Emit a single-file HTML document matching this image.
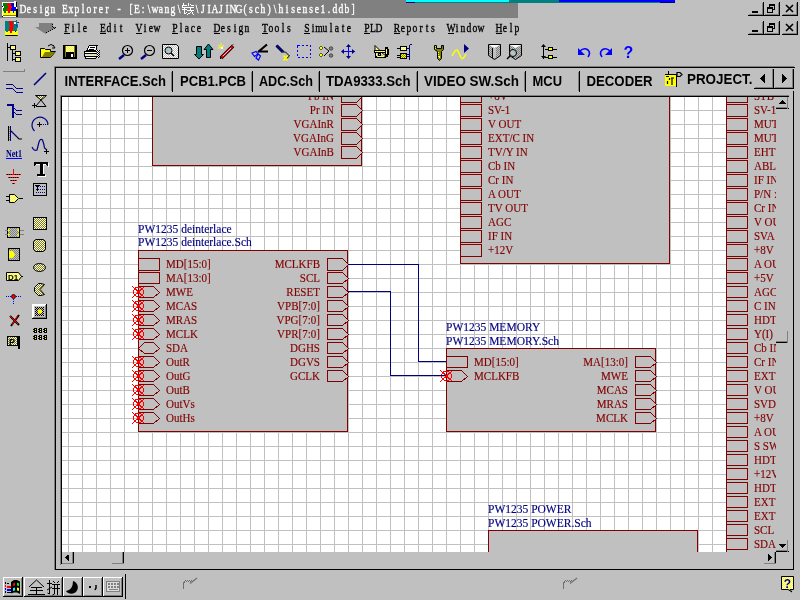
<!DOCTYPE html>
<html><head><meta charset="utf-8"><style>
html,body{margin:0;padding:0;width:800px;height:600px;overflow:hidden;background:#c0c0c0}
svg{position:absolute;left:0;top:0;will-change:transform}
.mono{font-family:"Liberation Mono",monospace}
</style></head><body>
<svg width="800" height="600" viewBox="0 0 800 600" shape-rendering="crispEdges">
<rect x="0" y="0" width="800" height="600" fill="#c0c0c0"/>
<rect x="0" y="0" width="518" height="18" fill="#808080"/>
<rect x="406" y="0" width="269" height="2" fill="#00ffff"/>
<rect x="509" y="0" width="50" height="2" fill="#008080"/>
<rect x="559" y="0" width="116" height="2" fill="#0000ff"/>
<rect x="406" y="2" width="9" height="1" fill="#000080"/>
<rect x="415" y="2" width="245" height="1" fill="#008080"/>
<rect x="660" y="2" width="15" height="1" fill="#000080"/>
<text transform="scale(0.8,1)" x="28.75 36.25 43.75 51.25 58.75 66.25 73.75 81.25 88.75 96.25 103.75 111.25 118.75 126.25 133.75 141.25 148.75 156.25 163.75 171.25 178.75 186.25 193.75 201.25 208.75 216.25 223.75" y="13" font-family="Liberation Serif" font-size="12" text-anchor="middle" fill="#ffffff" stroke="#ffffff" stroke-width="0.35" xml:space="preserve">Design Explorer - [E:\wang\</text>
<text transform="scale(0.8,1)" x="246.25 253.75 261.25 268.75 276.25 283.75 291.25 298.75 306.25 313.75 321.25 328.75 336.25 343.75 351.25 358.75 366.25 373.75 381.25 388.75 396.25 403.75 411.25 418.75 426.25 433.75 441.25" y="13" font-family="Liberation Serif" font-size="12" text-anchor="middle" fill="#ffffff" stroke="#ffffff" stroke-width="0.35" xml:space="preserve">\JIAJING(sch)\hisense1.ddb]</text>
<text transform="scale(0.8,1)" x="83.75 91.25 98.75 106.25" y="32" font-family="Liberation Serif" font-size="12" text-anchor="middle" fill="#000000" stroke="#000000" stroke-width="0.35" xml:space="preserve">File</text>
<rect x="64" y="33" width="6" height="1" fill="#000000"/>
<text transform="scale(0.8,1)" x="128.75 136.25 143.75 151.25" y="32" font-family="Liberation Serif" font-size="12" text-anchor="middle" fill="#000000" stroke="#000000" stroke-width="0.35" xml:space="preserve">Edit</text>
<rect x="100" y="33" width="6" height="1" fill="#000000"/>
<text transform="scale(0.8,1)" x="173.75 181.25 188.75 196.25" y="32" font-family="Liberation Serif" font-size="12" text-anchor="middle" fill="#000000" stroke="#000000" stroke-width="0.35" xml:space="preserve">View</text>
<rect x="136" y="33" width="6" height="1" fill="#000000"/>
<text transform="scale(0.8,1)" x="218.75 226.25 233.75 241.25 248.75" y="32" font-family="Liberation Serif" font-size="12" text-anchor="middle" fill="#000000" stroke="#000000" stroke-width="0.35" xml:space="preserve">Place</text>
<rect x="172" y="33" width="6" height="1" fill="#000000"/>
<text transform="scale(0.8,1)" x="271.25 278.75 286.25 293.75 301.25 308.75" y="32" font-family="Liberation Serif" font-size="12" text-anchor="middle" fill="#000000" stroke="#000000" stroke-width="0.35" xml:space="preserve">Design</text>
<rect x="214" y="33" width="6" height="1" fill="#000000"/>
<text transform="scale(0.8,1)" x="331.25 338.75 346.25 353.75 361.25" y="32" font-family="Liberation Serif" font-size="12" text-anchor="middle" fill="#000000" stroke="#000000" stroke-width="0.35" xml:space="preserve">Tools</text>
<rect x="262" y="33" width="6" height="1" fill="#000000"/>
<text transform="scale(0.8,1)" x="383.75 391.25 398.75 406.25 413.75 421.25 428.75 436.25" y="32" font-family="Liberation Serif" font-size="12" text-anchor="middle" fill="#000000" stroke="#000000" stroke-width="0.35" xml:space="preserve">Simulate</text>
<rect x="304" y="33" width="6" height="1" fill="#000000"/>
<text transform="scale(0.8,1)" x="458.75 466.25 473.75" y="32" font-family="Liberation Serif" font-size="12" text-anchor="middle" fill="#000000" stroke="#000000" stroke-width="0.35" xml:space="preserve">PLD</text>
<rect x="364" y="33" width="6" height="1" fill="#000000"/>
<text transform="scale(0.8,1)" x="496.25 503.75 511.25 518.75 526.25 533.75 541.25" y="32" font-family="Liberation Serif" font-size="12" text-anchor="middle" fill="#000000" stroke="#000000" stroke-width="0.35" xml:space="preserve">Reports</text>
<rect x="394" y="33" width="6" height="1" fill="#000000"/>
<text transform="scale(0.8,1)" x="563.75 571.25 578.75 586.25 593.75 601.25" y="32" font-family="Liberation Serif" font-size="12" text-anchor="middle" fill="#000000" stroke="#000000" stroke-width="0.35" xml:space="preserve">Window</text>
<rect x="448" y="33" width="6" height="1" fill="#000000"/>
<text transform="scale(0.8,1)" x="623.75 631.25 638.75 646.25" y="32" font-family="Liberation Serif" font-size="12" text-anchor="middle" fill="#000000" stroke="#000000" stroke-width="0.35" xml:space="preserve">Help</text>
<rect x="496" y="33" width="6" height="1" fill="#000000"/>
<rect x="763" y="2" width="1" height="14" fill="#000000"/>
<rect x="748" y="15" width="16" height="1" fill="#000000"/>
<rect x="762" y="3" width="1" height="12" fill="#808080"/>
<rect x="749" y="14" width="14" height="1" fill="#808080"/>
<rect x="779" y="2" width="1" height="14" fill="#000000"/>
<rect x="764" y="15" width="16" height="1" fill="#000000"/>
<rect x="778" y="3" width="1" height="12" fill="#808080"/>
<rect x="765" y="14" width="14" height="1" fill="#808080"/>
<rect x="797" y="2" width="1" height="14" fill="#000000"/>
<rect x="782" y="15" width="16" height="1" fill="#000000"/>
<rect x="796" y="3" width="1" height="12" fill="#808080"/>
<rect x="783" y="14" width="14" height="1" fill="#808080"/>
<rect x="752" y="11" width="6" height="2" fill="#000"/>
<rect x="769" y="4" width="6" height="6" fill="#000"/>
<rect x="770" y="6" width="4" height="3" fill="#c0c0c0"/>
<rect x="767" y="7" width="6" height="6" fill="#000"/>
<rect x="768" y="9" width="4" height="3" fill="#c0c0c0"/>
<path d="M786 5L793 12M793 5L786 12" stroke="#000" stroke-width="1.6" shape-rendering="auto"/>
<rect x="763" y="21" width="1" height="14" fill="#000000"/>
<rect x="748" y="34" width="16" height="1" fill="#000000"/>
<rect x="762" y="22" width="1" height="12" fill="#808080"/>
<rect x="749" y="33" width="14" height="1" fill="#808080"/>
<rect x="779" y="21" width="1" height="14" fill="#000000"/>
<rect x="764" y="34" width="16" height="1" fill="#000000"/>
<rect x="778" y="22" width="1" height="12" fill="#808080"/>
<rect x="765" y="33" width="14" height="1" fill="#808080"/>
<rect x="797" y="21" width="1" height="14" fill="#000000"/>
<rect x="782" y="34" width="16" height="1" fill="#000000"/>
<rect x="796" y="22" width="1" height="12" fill="#808080"/>
<rect x="783" y="33" width="14" height="1" fill="#808080"/>
<rect x="752" y="30" width="6" height="2" fill="#000"/>
<rect x="769" y="23" width="6" height="6" fill="#000"/>
<rect x="770" y="25" width="4" height="3" fill="#c0c0c0"/>
<rect x="767" y="26" width="6" height="6" fill="#000"/>
<rect x="768" y="28" width="4" height="3" fill="#c0c0c0"/>
<path d="M786 24L793 31M793 24L786 31" stroke="#000" stroke-width="1.6" shape-rendering="auto"/>
<rect x="54" y="66" width="1" height="504" fill="#808080"/>
<rect x="54" y="66" width="740" height="1" fill="#808080"/>
<rect x="55" y="67" width="1" height="503" fill="#000000"/>
<rect x="55" y="67" width="740" height="1" fill="#000000"/>
<rect x="55" y="569" width="739" height="1" fill="#000000"/>
<rect x="793" y="91" width="1" height="479" fill="#000000"/>
<rect x="773" y="69" width="1" height="20" fill="#000000"/>
<rect x="772" y="69" width="1" height="19" fill="#808080"/>
<rect x="755" y="87" width="18" height="1" fill="#808080"/>
<rect x="793" y="69" width="1" height="20" fill="#000000"/>
<rect x="792" y="69" width="1" height="19" fill="#808080"/>
<rect x="775" y="87" width="18" height="1" fill="#808080"/>
<rect x="754" y="88" width="40" height="1" fill="#000000"/>
<polygon points="760,78.5 765,74 765,83" fill="#000"/>
<polygon points="787,78.5 782,74 782,83" fill="#000"/>
<rect x="172" y="71" width="1" height="21" fill="#000000"/>
<rect x="171" y="72" width="1" height="19" fill="#808080"/>
<rect x="252" y="71" width="1" height="21" fill="#000000"/>
<rect x="251" y="72" width="1" height="19" fill="#808080"/>
<rect x="319" y="71" width="1" height="21" fill="#000000"/>
<rect x="318" y="72" width="1" height="19" fill="#808080"/>
<rect x="417" y="71" width="1" height="21" fill="#000000"/>
<rect x="416" y="72" width="1" height="19" fill="#808080"/>
<rect x="525" y="71" width="1" height="21" fill="#000000"/>
<rect x="524" y="72" width="1" height="19" fill="#808080"/>
<rect x="579" y="71" width="1" height="21" fill="#000000"/>
<rect x="578" y="72" width="1" height="19" fill="#808080"/>
<text x="64.5" y="86" font-family="Liberation Sans" font-weight="bold" font-size="14" fill="#000" textLength="101.5" lengthAdjust="spacingAndGlyphs">INTERFACE.Sch</text>
<text x="180" y="86" font-family="Liberation Sans" font-weight="bold" font-size="14" fill="#000" textLength="66" lengthAdjust="spacingAndGlyphs">PCB1.PCB</text>
<text x="259" y="86" font-family="Liberation Sans" font-weight="bold" font-size="14" fill="#000" textLength="54" lengthAdjust="spacingAndGlyphs">ADC.Sch</text>
<text x="326" y="86" font-family="Liberation Sans" font-weight="bold" font-size="14" fill="#000" textLength="84.5" lengthAdjust="spacingAndGlyphs">TDA9333.Sch</text>
<text x="424" y="86" font-family="Liberation Sans" font-weight="bold" font-size="14" fill="#000" textLength="95" lengthAdjust="spacingAndGlyphs">VIDEO SW.Sch</text>
<text x="532.5" y="86" font-family="Liberation Sans" font-weight="bold" font-size="14" fill="#000" textLength="29.5" lengthAdjust="spacingAndGlyphs">MCU</text>
<text x="586.5" y="86" font-family="Liberation Sans" font-weight="bold" font-size="14" fill="#000" textLength="66" lengthAdjust="spacingAndGlyphs">DECODER</text>
<text x="687" y="84" font-family="Liberation Sans" font-weight="bold" font-size="14" fill="#000" textLength="65.5" lengthAdjust="spacingAndGlyphs">PROJECT.</text>
<rect x="665" y="74" width="12" height="12" fill="#ffff00"/>
<rect x="665" y="74" width="12" height="1" fill="#000"/>
<rect x="668" y="71" width="1" height="4" fill="#000"/>
<rect x="676" y="74" width="1" height="13" fill="#000"/>
<path d="M666 76.5H669M669.5 78V80M667.5 81V84M671 78H674M672 78V85M677 72.5H680L682 74.5L680 76.5H677Z" stroke="#000" stroke-width="1.2" fill="none" shape-rendering="auto"/>
<rect x="60" y="95" width="1" height="470" fill="#808080"/>
<rect x="60" y="95" width="729" height="1" fill="#808080"/>
<rect x="61" y="96" width="1" height="468" fill="#000000"/>
<rect x="61" y="96" width="728" height="1" fill="#000000"/>
<rect x="73" y="552" width="1" height="12" fill="#000000"/>
<rect x="62" y="563" width="12" height="1" fill="#808080"/>
<rect x="72" y="552" width="1" height="11" fill="#808080"/>
<polygon points="65,557.5 68.5,554.5 68.5,560.5" fill="#000"/>
<rect x="123" y="552" width="1" height="12" fill="#000000"/>
<rect x="122" y="552" width="1" height="11" fill="#808080"/>
<rect x="112" y="563" width="12" height="1" fill="#808080"/>
<rect x="775" y="552" width="1" height="12" fill="#000000"/>
<rect x="774" y="552" width="1" height="11" fill="#808080"/>
<rect x="764" y="563" width="12" height="1" fill="#808080"/>
<polygon points="772,557.5 768,554 768,561" fill="#000"/>
<rect x="776" y="108" width="13" height="1" fill="#000000"/>
<rect x="787" y="97" width="1" height="12" fill="#808080"/>
<rect x="776" y="107" width="12" height="1" fill="#808080"/>
<polygon points="782.5,100 779,104 786,104" fill="#000"/>
<rect x="776" y="342" width="12" height="1" fill="#000000"/>
<rect x="787" y="331" width="1" height="12" fill="#808080"/>
<rect x="776" y="341" width="12" height="1" fill="#808080"/>
<rect x="776" y="551" width="13" height="1" fill="#000000"/>
<rect x="787" y="540" width="1" height="12" fill="#808080"/>
<rect x="776" y="550" width="12" height="1" fill="#808080"/>
<polygon points="782.5,548 779,544 786,544" fill="#000"/>
<rect x="3" y="577" width="20" height="1" fill="#ffffff"/>
<rect x="3" y="577" width="1" height="20" fill="#ffffff"/>
<rect x="3" y="596" width="20" height="1" fill="#000000"/>
<rect x="22" y="577" width="1" height="20" fill="#000000"/>
<rect x="4" y="595" width="18" height="1" fill="#808080"/>
<rect x="21" y="578" width="1" height="18" fill="#808080"/>
<rect x="24" y="577" width="39" height="1" fill="#ffffff"/>
<rect x="24" y="577" width="1" height="20" fill="#ffffff"/>
<rect x="24" y="596" width="39" height="1" fill="#000000"/>
<rect x="62" y="577" width="1" height="20" fill="#000000"/>
<rect x="25" y="595" width="37" height="1" fill="#808080"/>
<rect x="61" y="578" width="1" height="18" fill="#808080"/>
<rect x="63" y="577" width="20" height="1" fill="#ffffff"/>
<rect x="63" y="577" width="1" height="20" fill="#ffffff"/>
<rect x="63" y="596" width="20" height="1" fill="#000000"/>
<rect x="82" y="577" width="1" height="20" fill="#000000"/>
<rect x="64" y="595" width="18" height="1" fill="#808080"/>
<rect x="81" y="578" width="1" height="18" fill="#808080"/>
<rect x="83" y="577" width="20" height="1" fill="#ffffff"/>
<rect x="83" y="577" width="1" height="20" fill="#ffffff"/>
<rect x="83" y="596" width="20" height="1" fill="#000000"/>
<rect x="102" y="577" width="1" height="20" fill="#000000"/>
<rect x="84" y="595" width="18" height="1" fill="#808080"/>
<rect x="101" y="578" width="1" height="18" fill="#808080"/>
<rect x="103" y="577" width="20" height="1" fill="#ffffff"/>
<rect x="103" y="577" width="1" height="20" fill="#ffffff"/>
<rect x="103" y="596" width="20" height="1" fill="#000000"/>
<rect x="122" y="577" width="1" height="20" fill="#000000"/>
<rect x="104" y="595" width="18" height="1" fill="#808080"/>
<rect x="121" y="578" width="1" height="18" fill="#808080"/>
<rect x="125" y="574" width="1" height="25" fill="#000000"/>
<defs><pattern id="dy" width="2" height="2" patternUnits="userSpaceOnUse"><rect width="2" height="2" fill="#ffff00"/><rect width="1" height="1" fill="#ffffff"/><rect x="1" y="1" width="1" height="1" fill="#ffffff"/></pattern><pattern id="dk" width="2" height="2" patternUnits="userSpaceOnUse"><rect width="2" height="2" fill="#808000"/><rect width="1" height="1" fill="#ffff00"/><rect x="1" y="1" width="1" height="1" fill="#ffff00"/></pattern><pattern id="dkw" width="2" height="2" patternUnits="userSpaceOnUse"><rect width="2" height="2" fill="#808000"/><rect width="1" height="1" fill="#ffffff"/><rect x="1" y="1" width="1" height="1" fill="#ffffff"/></pattern><pattern id="dg" width="2" height="2" patternUnits="userSpaceOnUse"><rect width="2" height="2" fill="#c0c0c0"/><rect width="1" height="1" fill="#808080"/><rect x="1" y="1" width="1" height="1" fill="#808080"/></pattern><pattern id="dw" width="2" height="2" patternUnits="userSpaceOnUse"><rect width="2" height="2" fill="#c0c0c0"/><rect width="1" height="1" fill="#ffffff"/><rect x="1" y="1" width="1" height="1" fill="#ffffff"/></pattern></defs>
<rect x="2" y="2" width="15" height="15" fill="#ffffff"/>
<rect x="3" y="3" width="4" height="8" fill="#008000"/>
<rect x="7" y="3" width="4" height="8" fill="#ff0000"/>
<rect x="11" y="3" width="5" height="8" fill="#0000ff"/>
<rect x="3" y="11" width="13" height="4" fill="#ffff00"/>
<rect x="4" y="11" width="2" height="2" fill="#008000"/>
<rect x="8" y="11" width="2" height="2" fill="#ff0000"/>
<rect x="13" y="11" width="1" height="2" fill="#0000ff"/>
<rect x="7" y="6" width="1" height="2" fill="#008000"/>
<rect x="3" y="6" width="1" height="2" fill="#ffffff"/>
<rect x="11" y="6" width="1" height="2" fill="#ff0000"/>
<rect x="7" y="3" width="1" height="1" fill="#008000"/>
<rect x="3" y="15" width="13" height="1" fill="#808000"/>
<rect x="16" y="9" width="2" height="8" fill="#000000"/>
<rect x="2" y="16" width="1" height="1" fill="#000000"/>
<rect x="2" y="6" width="1" height="1" fill="#000000"/>
<rect x="14" y="1" width="2" height="6" fill="#ffffff"/>
<rect x="16" y="2" width="1" height="5" fill="#000000"/>
<rect x="13" y="4" width="1" height="1" fill="#000000"/>
<rect x="5" y="21" width="4" height="10" fill="#008080"/>
<rect x="9" y="21" width="4" height="10" fill="#ff0000"/>
<rect x="13" y="21" width="4" height="10" fill="#008080"/>
<rect x="5" y="31" width="13" height="4" fill="#ffff00"/>
<rect x="6" y="31" width="2" height="1" fill="#008080"/>
<rect x="10" y="31" width="2" height="2" fill="#ff0000"/>
<rect x="15" y="31" width="1" height="1" fill="#0000ff"/>
<rect x="13" y="25" width="1" height="2" fill="#ff0000"/>
<rect x="9" y="25" width="1" height="2" fill="#008080"/>
<rect x="17" y="24" width="1" height="4" fill="#008080"/>
<rect x="5" y="35" width="13" height="1" fill="#000000"/>
<rect x="5" y="35" width="1" height="1" fill="#008000"/>
<rect x="17" y="35" width="1" height="1" fill="#008000"/>
<rect x="14" y="22" width="2" height="2" fill="#ffffff"/>
<rect x="17" y="22" width="2" height="1" fill="#800080"/>
<rect x="16" y="20" width="1" height="1" fill="#008080"/>
<rect x="16" y="25" width="1" height="1" fill="#0000ff"/>
<path d="M39 23H53V27H56L45.5 34L35 27H39Z" fill="#808080" shape-rendering="auto"/>
<rect x="52" y="24" width="1" height="1" fill="#000000"/>
<rect x="52" y="26" width="1" height="1" fill="#000000"/>
<rect x="53" y="27" width="1" height="1" fill="#000000"/>
<rect x="55" y="27" width="1" height="1" fill="#000000"/>
<rect x="54" y="28" width="1" height="1" fill="#000000"/>
<rect x="52" y="29" width="1" height="1" fill="#000000"/>
<rect x="50" y="30" width="1" height="1" fill="#000000"/>
<rect x="48" y="31" width="1" height="1" fill="#000000"/>
<rect x="46" y="32" width="1" height="1" fill="#000000"/>
<rect x="7" y="43" width="1" height="18" fill="#000000"/>
<rect x="7" y="47" width="4" height="1" fill="#000000"/>
<rect x="10" y="45" width="6" height="5" fill="#000000"/>
<rect x="11" y="46" width="4" height="3" fill="url(#dy)"/>
<rect x="12" y="50" width="1" height="11" fill="#000000"/>
<rect x="12" y="53" width="4" height="1" fill="#000000"/>
<rect x="12" y="59" width="4" height="1" fill="#000000"/>
<rect x="15" y="51" width="6" height="5" fill="#000000"/>
<rect x="16" y="52" width="4" height="3" fill="url(#dy)"/>
<rect x="15" y="57" width="6" height="5" fill="#000000"/>
<rect x="16" y="58" width="4" height="3" fill="url(#dy)"/>
<path d="M40.5 48.5H44.5L45.5 49.5H50.5V51.5H55.5L50.5 57.5H40.5Z" fill="#ffff00" stroke="#000000" stroke-width="1" shape-rendering="auto"/>
<path d="M42 57L45 52H55L50.5 57Z" fill="#808000" shape-rendering="auto"/>
<path d="M48 46Q51 43 54 46M53 45L55 48L52 48" fill="none" stroke="#000000" stroke-width="1" shape-rendering="auto"/>
<rect x="63" y="45" width="14" height="14" fill="#000000"/>
<rect x="64" y="46" width="12" height="12" fill="#808000"/>
<rect x="64" y="45" width="12" height="13" fill="#000000"/>
<rect x="65" y="46" width="10" height="1" fill="#808000"/>
<rect x="66" y="46" width="8" height="6" fill="url(#dy)"/>
<rect x="65" y="46" width="1" height="11" fill="#808000"/>
<rect x="74" y="46" width="1" height="11" fill="#808000"/>
<rect x="66" y="52" width="8" height="6" fill="#000000"/>
<rect x="71" y="54" width="2" height="3" fill="#ffffff"/>
<rect x="89" y="45" width="9" height="1" fill="#000000"/>
<path d="M88.5 46H96.5L95.5 50H86.5Z" fill="#ffffff" shape-rendering="auto"/>
<rect x="88" y="46" width="1" height="2" fill="#000000"/>
<rect x="87" y="48" width="1" height="2" fill="#000000"/>
<rect x="96" y="46" width="1" height="4" fill="#000000"/>
<rect x="90" y="47" width="5" height="1" fill="#000000"/>
<rect x="89" y="49" width="5" height="1" fill="#000000"/>
<rect x="86" y="50" width="10" height="1" fill="#000000"/>
<rect x="84" y="51" width="13" height="1" fill="#000000"/>
<rect x="85" y="52" width="11" height="1" fill="#ffffff"/>
<rect x="84" y="53" width="13" height="1" fill="#000000"/>
<rect x="85" y="54" width="11" height="2" fill="#e0e0e0"/>
<rect x="91" y="55" width="3" height="1" fill="#ffff00"/>
<rect x="84" y="56" width="13" height="1" fill="#000000"/>
<rect x="86" y="57" width="9" height="1" fill="#ffffff"/>
<rect x="86" y="58" width="10" height="1" fill="#000000"/>
<rect x="84" y="51" width="1" height="6" fill="#000000"/>
<rect x="85" y="56" width="1" height="3" fill="#000000"/>
<rect x="97" y="50" width="1" height="1" fill="#000000"/>
<rect x="99" y="50" width="1" height="1" fill="#000000"/>
<rect x="96" y="51" width="1" height="1" fill="#000000"/>
<rect x="98" y="51" width="1" height="1" fill="#000000"/>
<rect x="97" y="52" width="1" height="1" fill="#000000"/>
<rect x="99" y="52" width="1" height="1" fill="#000000"/>
<rect x="98" y="53" width="1" height="1" fill="#000000"/>
<rect x="97" y="54" width="1" height="1" fill="#000000"/>
<rect x="99" y="54" width="1" height="1" fill="#000000"/>
<rect x="98" y="55" width="1" height="1" fill="#000000"/>
<rect x="97" y="56" width="1" height="1" fill="#000000"/>
<rect x="99" y="56" width="1" height="1" fill="#000000"/>
<rect x="96" y="57" width="1" height="1" fill="#000000"/>
<rect x="98" y="57" width="1" height="1" fill="#000000"/>
<rect x="96" y="50" width="1" height="1" fill="#ffffff"/>
<rect x="98" y="50" width="1" height="1" fill="#ffffff"/>
<rect x="97" y="51" width="1" height="1" fill="#ffffff"/>
<rect x="98" y="52" width="1" height="1" fill="#ffffff"/>
<rect x="97" y="53" width="1" height="1" fill="#ffffff"/>
<rect x="98" y="54" width="1" height="1" fill="#ffffff"/>
<rect x="97" y="55" width="1" height="1" fill="#ffffff"/>
<rect x="98" y="56" width="1" height="1" fill="#ffffff"/>
<rect x="97" y="57" width="1" height="1" fill="#ffffff"/>
<circle cx="127.5" cy="50.5" r="5" fill="#c0c0c0" stroke="#000000" stroke-width="1.2" shape-rendering="auto"/>
<path d="M119 59L124 55" fill="none" stroke="#000080" stroke-width="2.4" shape-rendering="auto"/>
<rect x="125" y="50" width="5" height="1" fill="#000000"/>
<rect x="127" y="48" width="1" height="5" fill="#000000"/>
<circle cx="149.5" cy="50.5" r="5" fill="#c0c0c0" stroke="#000000" stroke-width="1.2" shape-rendering="auto"/>
<path d="M141 59L146 55" fill="none" stroke="#000080" stroke-width="2.4" shape-rendering="auto"/>
<rect x="147" y="50" width="5" height="1" fill="#000000"/>
<path d="M162.5 44.5H176.5L178.5 46.5V58.5H162.5Z" fill="url(#dw)" stroke="#000000" stroke-width="1" shape-rendering="auto"/>
<circle cx="168.5" cy="50.5" r="3.5" fill="#c0c0c0" stroke="#000000" stroke-width="1" shape-rendering="auto"/>
<rect x="167" y="49" width="1" height="2" fill="#00ffff"/>
<path d="M171 53L174 56" fill="none" stroke="#000000" stroke-width="1.5" shape-rendering="auto"/>
<path d="M196.5 46.5H201.5V54.5H203.5L199 59L194.5 54.5H196.5Z" fill="#008080" stroke="#000000" stroke-width="1" shape-rendering="auto"/>
<path d="M206.5 57.5H210.5V49.5H213L208.5 44L204 49.5H206.5Z" fill="#008080" stroke="#000000" stroke-width="1" shape-rendering="auto"/>
<path d="M221 58L233 46" fill="none" stroke="#000000" stroke-width="3.6" shape-rendering="auto"/>
<path d="M221.5 57.5L232.5 46.5" fill="none" stroke="#ff0000" stroke-width="2" shape-rendering="auto"/>
<path d="M223 56L231 48" fill="none" stroke="#ffffff" stroke-width="0.8" shape-rendering="auto"/>
<rect x="232" y="44" width="2" height="1" fill="#808080"/>
<rect x="220" y="57" width="1" height="2" fill="#000000"/>
<path d="M218 45L222 49M221 43V48M224 45L221 48M218 48H222" fill="none" stroke="#ffff00" stroke-width="1" shape-rendering="auto"/>
<rect x="221" y="47" width="2" height="2" fill="#ffffff"/>
<path d="M258 52L267 44.5M258 51.5H268" fill="none" stroke="#000000" stroke-width="2.2" shape-rendering="auto"/>
<path d="M256 51.5L252 53L254.5 56.5L258 54Z" fill="none" stroke="#0000ff" stroke-width="1.2" shape-rendering="auto"/>
<path d="M258 54L256 58L258.5 60L260.5 56Z" fill="none" stroke="#0000ff" stroke-width="1.2" shape-rendering="auto"/>
<path d="M276.5 45.5L283 52" fill="none" stroke="#000000" stroke-width="3" shape-rendering="auto"/>
<path d="M276.5 45.5L283 52" fill="none" stroke="#0000c0" stroke-width="1.4" shape-rendering="auto"/>
<path d="M283 52H285.5L289.5 56L286 59" fill="none" stroke="#000000" stroke-width="1" shape-rendering="auto"/>
<path d="M283.5 55.5L287.5 60.5M287.5 55.5L283.5 60.5" fill="none" stroke="#ffff00" stroke-width="1.6" shape-rendering="auto"/>
<rect x="297.5" y="45.5" width="13" height="12" fill="none" stroke="#0000ff" stroke-width="1" stroke-dasharray="2,2"/>
<path d="M319 48L321 46L323 48L321 50Z" fill="#ffff00" stroke="#000000" stroke-width="0.6" shape-rendering="auto"/>
<circle cx="331" cy="48.5" r="1.8" fill="#808080" stroke="#000000" stroke-width="0.5" shape-rendering="auto"/>
<path d="M319 55L321 53L323 55L321 57Z" fill="#ffff00" stroke="#000000" stroke-width="0.6" shape-rendering="auto"/>
<circle cx="331" cy="55.5" r="1.8" fill="#808080" stroke="#000000" stroke-width="0.5" shape-rendering="auto"/>
<path d="M324 47L329 51L324 56" fill="none" stroke="#000000" stroke-width="1" shape-rendering="auto"/>
<rect x="342" y="51" width="13" height="1" fill="#0000ff"/>
<rect x="348" y="45" width="1" height="13" fill="#0000ff"/>
<path d="M341 51.5L344 49V54Z M355 51.5L352 49V54Z M348.5 44L346 47H351Z M348.5 59L346 56H351Z" fill="#000080" shape-rendering="auto"/>
<path d="M375 45.5L380 50.5H375Z" fill="url(#dy)" stroke="#000000" stroke-width="1" shape-rendering="auto"/>
<rect x="374" y="50" width="12" height="3" fill="#000000"/>
<rect x="375" y="51" width="10" height="1" fill="url(#dy)"/>
<rect x="385" y="47" width="3" height="10" fill="#000000"/>
<rect x="386" y="49" width="1" height="5" fill="url(#dy)"/>
<rect x="388" y="49" width="1" height="6" fill="#000000"/>
<rect x="375" y="53" width="2" height="5" fill="#000000"/>
<rect x="375" y="56" width="11" height="2" fill="#000000"/>
<rect x="376" y="53" width="1" height="3" fill="url(#dy)"/>
<rect x="377" y="56" width="7" height="1" fill="url(#dy)"/>
<rect x="378" y="53" width="3" height="3" fill="#000000"/>
<rect x="379" y="54" width="1" height="1" fill="#c0c0c0"/>
<path d="M381 53L385 56.5" fill="none" stroke="#ffff00" stroke-width="1" shape-rendering="auto"/>
<path d="M382 53L385.5 55.5" fill="none" stroke="#000000" stroke-width="0.8" shape-rendering="auto"/>
<rect x="400" y="46" width="7" height="5" fill="#000000"/>
<rect x="401" y="47" width="5" height="3" fill="url(#dy)"/>
<rect x="400" y="53" width="7" height="6" fill="#000000"/>
<rect x="401" y="54" width="5" height="4" fill="url(#dk)"/>
<rect x="397" y="48" width="4" height="1" fill="#000000"/>
<rect x="397" y="55" width="4" height="1" fill="#000000"/>
<rect x="397" y="57" width="4" height="1" fill="#000000"/>
<rect x="409" y="45" width="1" height="15" fill="#000080"/>
<rect x="407" y="48" width="3" height="1" fill="#000080"/>
<rect x="407" y="54" width="3" height="1" fill="#000080"/>
<rect x="407" y="56" width="3" height="1" fill="#000080"/>
<rect x="410" y="44" width="2" height="1" fill="#000080"/>
<path d="M434.5 45.5V49.5L437.5 51.5V58.5L439.5 60.5L441.5 58.5V51.5L443.5 49.5V45.5H441.5V48.5H436.5V45.5Z" fill="#808000" stroke="#000000" stroke-width="1" shape-rendering="auto"/>
<rect x="435" y="46" width="1" height="1" fill="#ffff00"/>
<rect x="435" y="48" width="1" height="1" fill="#ffff00"/>
<rect x="438" y="52" width="1" height="1" fill="#ffff00"/>
<rect x="438" y="54" width="1" height="1" fill="#ffff00"/>
<rect x="438" y="56" width="1" height="1" fill="#ffff00"/>
<rect x="439" y="56" width="1" height="2" fill="#ffffff"/>
<path d="M452 56C454 52 455.5 49.5 457 50C459 51 460 58 462 58.5C463.5 59 465 56 466 54" fill="none" stroke="#ffff00" stroke-width="1.5" shape-rendering="auto"/>
<path d="M464 44L469 48.5L464 53Z" fill="#000080" shape-rendering="auto"/>
<path d="M488.5 44.5H500.5V55.5L494.5 59.5L488.5 55.5Z" fill="url(#dg)" stroke="#000000" stroke-width="1" shape-rendering="auto"/>
<path d="M489 45L494.5 48L500 45Z" fill="#ffffff" shape-rendering="auto"/>
<rect x="493" y="48" width="3" height="10" fill="#c0c0c0"/>
<rect x="492" y="48" width="1" height="10" fill="#000000"/>
<path d="M509.5 44.5H521.5V55.5L515.5 59.5L509.5 55.5Z" fill="url(#dg)" stroke="#000000" stroke-width="1" shape-rendering="auto"/>
<path d="M510 45L515.5 48L521 45Z" fill="#ffffff" shape-rendering="auto"/>
<circle cx="513" cy="53" r="3.5" fill="#c0c0c0" stroke="#000000" stroke-width="1" shape-rendering="auto"/>
<rect x="514" y="51" width="1" height="2" fill="#00ffff"/>
<path d="M510 56L507 59" fill="none" stroke="#000000" stroke-width="1.5" shape-rendering="auto"/>
<rect x="543" y="45" width="1" height="14" fill="#000000"/>
<path d="M541 47L543.5 44L546 47ZM541 56L543.5 59L546 56Z" fill="#000000" shape-rendering="auto"/>
<rect x="548" y="47" width="5" height="4" fill="#000000"/>
<rect x="549" y="48" width="3" height="2" fill="#ffff00"/>
<rect x="545" y="49" width="4" height="1" fill="#000000"/>
<rect x="553" y="49" width="4" height="1" fill="#000000"/>
<rect x="548" y="55" width="5" height="4" fill="#000000"/>
<rect x="549" y="56" width="3" height="2" fill="#ffff00"/>
<rect x="545" y="57" width="4" height="1" fill="#000000"/>
<rect x="553" y="57" width="4" height="1" fill="#000000"/>
<path d="M580 51Q584 47 588 50Q591 53 588 57" fill="none" stroke="#0000ff" stroke-width="1.6" shape-rendering="auto"/>
<path d="M578 48V55H585Z" fill="#0000ff" shape-rendering="auto"/>
<path d="M610 51Q606 47 602 50Q599 53 602 57" fill="none" stroke="#0000ff" stroke-width="1.6" shape-rendering="auto"/>
<path d="M612 48V55H605Z" fill="#0000ff" shape-rendering="auto"/>
<text x="628.5" y="58" font-family="Liberation Sans" font-weight="bold" font-size="16" fill="#0000ff" text-anchor="middle">?</text>
<rect x="3" y="71" width="22" height="1" fill="#808080"/>
<rect x="24" y="69" width="1" height="3" fill="#808080"/>
<path d="M34 85L46 73" fill="none" stroke="#000080" stroke-width="1.6" shape-rendering="auto"/>
<rect x="6" y="84" width="1" height="1" fill="#0000ff"/>
<rect x="7" y="84" width="1" height="1" fill="#000000"/>
<rect x="8" y="84" width="1" height="1" fill="#0000ff"/>
<rect x="9" y="84" width="1" height="1" fill="#000000"/>
<rect x="10" y="84" width="1" height="1" fill="#0000ff"/>
<rect x="11" y="84" width="1" height="1" fill="#000000"/>
<rect x="12" y="84" width="1" height="1" fill="#0000ff"/>
<rect x="13" y="85" width="1" height="1" fill="#000000"/>
<rect x="14" y="86" width="1" height="1" fill="#0000ff"/>
<rect x="15" y="87" width="1" height="1" fill="#000000"/>
<rect x="16" y="88" width="1" height="1" fill="#0000ff"/>
<rect x="17" y="88" width="1" height="1" fill="#000000"/>
<rect x="18" y="88" width="1" height="1" fill="#0000ff"/>
<rect x="19" y="88" width="1" height="1" fill="#000000"/>
<rect x="20" y="88" width="1" height="1" fill="#0000ff"/>
<rect x="21" y="88" width="1" height="1" fill="#000000"/>
<rect x="22" y="88" width="1" height="1" fill="#0000ff"/>
<rect x="6" y="88" width="1" height="1" fill="#0000ff"/>
<rect x="7" y="88" width="1" height="1" fill="#000000"/>
<rect x="8" y="88" width="1" height="1" fill="#0000ff"/>
<rect x="9" y="88" width="1" height="1" fill="#000000"/>
<rect x="10" y="88" width="1" height="1" fill="#0000ff"/>
<rect x="11" y="88" width="1" height="1" fill="#000000"/>
<rect x="12" y="88" width="1" height="1" fill="#0000ff"/>
<rect x="13" y="89" width="1" height="1" fill="#000000"/>
<rect x="14" y="90" width="1" height="1" fill="#0000ff"/>
<rect x="15" y="91" width="1" height="1" fill="#000000"/>
<rect x="16" y="92" width="1" height="1" fill="#0000ff"/>
<rect x="17" y="92" width="1" height="1" fill="#000000"/>
<rect x="18" y="92" width="1" height="1" fill="#0000ff"/>
<rect x="19" y="92" width="1" height="1" fill="#000000"/>
<rect x="20" y="92" width="1" height="1" fill="#0000ff"/>
<rect x="21" y="92" width="1" height="1" fill="#000000"/>
<rect x="22" y="92" width="1" height="1" fill="#0000ff"/>
<path d="M35.5 95.5H46.5L41 100Z" fill="url(#dkw)" stroke="#000000" stroke-width="1" shape-rendering="auto"/>
<path d="M41 100L36 106M41 100L46 106.5H36" fill="none" stroke="#000000" stroke-width="1" shape-rendering="auto"/>
<rect x="32" y="105" width="5" height="1" fill="#000000"/>
<rect x="34" y="103" width="1" height="5" fill="#000000"/>
<rect x="7" y="104" width="7" height="2" fill="#000080"/>
<rect x="12" y="104" width="2" height="14" fill="#000080"/>
<rect x="13" y="107" width="1" height="1" fill="#0000ff"/>
<rect x="14" y="108" width="1" height="1" fill="#000000"/>
<rect x="15" y="109" width="1" height="1" fill="#0000ff"/>
<rect x="16" y="110" width="1" height="1" fill="#000000"/>
<rect x="17" y="110" width="1" height="1" fill="#0000ff"/>
<rect x="18" y="110" width="1" height="1" fill="#000000"/>
<rect x="19" y="110" width="1" height="1" fill="#0000ff"/>
<rect x="20" y="110" width="1" height="1" fill="#000000"/>
<rect x="21" y="110" width="1" height="1" fill="#0000ff"/>
<rect x="13" y="111" width="1" height="1" fill="#0000ff"/>
<rect x="14" y="112" width="1" height="1" fill="#000000"/>
<rect x="15" y="113" width="1" height="1" fill="#0000ff"/>
<rect x="16" y="114" width="1" height="1" fill="#000000"/>
<rect x="17" y="114" width="1" height="1" fill="#0000ff"/>
<rect x="18" y="114" width="1" height="1" fill="#000000"/>
<rect x="19" y="114" width="1" height="1" fill="#0000ff"/>
<rect x="20" y="114" width="1" height="1" fill="#000000"/>
<rect x="21" y="114" width="1" height="1" fill="#0000ff"/>
<rect x="8" y="126" width="3" height="14" fill="url(#dg)"/>
<rect x="8" y="126" width="1" height="15" fill="#000000"/>
<rect x="10" y="126" width="1" height="15" fill="#000080"/>
<path d="M11 131L19 139H22" fill="none" stroke="#000000" stroke-width="1.2" shape-rendering="auto"/>
<path d="M12 132L18 138" fill="none" stroke="#0000ff" stroke-width="0.8" shape-rendering="auto"/>
<path d="M34.5 131A8 8 0 1 1 48 124.5" fill="none" stroke="#000080" stroke-width="1.2" shape-rendering="auto"/>
<rect x="37" y="124" width="5" height="1" fill="#000000"/>
<rect x="39" y="122" width="1" height="5" fill="#000000"/>
<rect x="43" y="124" width="1" height="1" fill="#000080"/>
<rect x="45" y="124" width="1" height="1" fill="#000080"/>
<rect x="47" y="124" width="1" height="1" fill="#000080"/>
<text x="6" y="157" font-family="Liberation Serif" font-weight="bold" font-size="10" fill="#000080" textLength="16" lengthAdjust="spacingAndGlyphs">Net1</text>
<rect x="6" y="158" width="16" height="1" fill="#0000ff"/>
<path d="M32 147Q34 151.5 37 150Q38 146 39 142Q40.5 138 42.5 140Q44 144 44.5 148L47 150" fill="none" stroke="#000080" stroke-width="1.2" shape-rendering="auto"/>
<rect x="44" y="151" width="5" height="1" fill="#000000"/>
<rect x="46" y="149" width="1" height="5" fill="#000000"/>
<rect x="35" y="163" width="14" height="2" fill="#ffffff"/>
<rect x="41" y="163" width="3" height="13" fill="#ffffff"/>
<rect x="38" y="175" width="8" height="2" fill="#ffffff"/>
<rect x="48" y="163" width="1" height="4" fill="#ffffff"/>
<rect x="34" y="162" width="14" height="2" fill="#000000"/>
<rect x="34" y="162" width="1" height="4" fill="#000000"/>
<rect x="47" y="162" width="1" height="4" fill="#000000"/>
<rect x="35" y="164" width="1" height="1" fill="#000000"/>
<rect x="46" y="164" width="1" height="1" fill="#000000"/>
<rect x="40" y="162" width="3" height="13" fill="#000000"/>
<rect x="37" y="174" width="8" height="2" fill="#000000"/>
<line x1="6" y1="174.5" x2="21" y2="174.5" stroke="#ff0000" stroke-width="1"/>
<line x1="7" y1="174.5" x2="21" y2="174.5" stroke="#000000" stroke-dasharray="1,1"/>
<line x1="8" y1="177.5" x2="19" y2="177.5" stroke="#ff0000" stroke-width="1"/>
<line x1="9" y1="177.5" x2="19" y2="177.5" stroke="#000000" stroke-dasharray="1,1"/>
<line x1="10" y1="180.5" x2="17" y2="180.5" stroke="#ff0000" stroke-width="1"/>
<line x1="11" y1="180.5" x2="17" y2="180.5" stroke="#000000" stroke-dasharray="1,1"/>
<line x1="12" y1="183.5" x2="15" y2="183.5" stroke="#ff0000" stroke-width="1"/>
<line x1="13" y1="183.5" x2="15" y2="183.5" stroke="#000000" stroke-dasharray="1,1"/>
<rect x="13" y="169" width="1" height="6" fill="#ff0000"/>
<rect x="33" y="183" width="14" height="13" fill="#000000"/>
<rect x="34" y="184" width="12" height="11" fill="#c0c0c0"/>
<rect x="34" y="184" width="12" height="11" fill="#c0c0c0"/>
<rect x="36" y="186" width="1" height="1" fill="#000080"/>
<rect x="38" y="186" width="1" height="1" fill="#000080"/>
<rect x="40" y="186" width="1" height="1" fill="#000080"/>
<rect x="42" y="186" width="1" height="1" fill="#000080"/>
<rect x="44" y="186" width="1" height="1" fill="#000080"/>
<rect x="36" y="189" width="1" height="1" fill="#000080"/>
<rect x="38" y="189" width="1" height="1" fill="#000080"/>
<rect x="40" y="189" width="1" height="1" fill="#000080"/>
<rect x="42" y="189" width="1" height="1" fill="#000080"/>
<rect x="44" y="189" width="1" height="1" fill="#000080"/>
<rect x="36" y="192" width="1" height="1" fill="#000080"/>
<rect x="38" y="192" width="1" height="1" fill="#000080"/>
<rect x="40" y="192" width="1" height="1" fill="#000080"/>
<rect x="42" y="192" width="1" height="1" fill="#000080"/>
<rect x="44" y="192" width="1" height="1" fill="#000080"/>
<rect x="35" y="185" width="5" height="1" fill="#000000"/>
<rect x="37" y="185" width="1" height="6" fill="#000000"/>
<path d="M9.5 194.5H14.5L18.5 198.5L14.5 202.5H9.5Z" fill="url(#dy)" stroke="#000000" stroke-width="1" shape-rendering="auto"/>
<rect x="6" y="196" width="4" height="1" fill="#000000"/>
<rect x="6" y="200" width="4" height="1" fill="#000000"/>
<rect x="19" y="198" width="4" height="1" fill="#000000"/>
<rect x="33" y="217" width="14" height="13" fill="#000000"/>
<rect x="34" y="218" width="12" height="11" fill="url(#dkw)"/>
<rect x="7" y="227" width="13" height="11" fill="#000000"/>
<rect x="8" y="228" width="11" height="9" fill="url(#dg)"/>
<rect x="5" y="230" width="3" height="1" fill="#808080"/>
<rect x="5" y="234" width="3" height="1" fill="#808080"/>
<rect x="20" y="230" width="4" height="1" fill="#808080"/>
<rect x="20" y="234" width="4" height="1" fill="#808080"/>
<path d="M8 228L10 230L8 232ZM8 233L10 235L8 237ZM19 228L17 230L19 232ZM19 233L17 235L19 237Z" fill="#ffff00" shape-rendering="auto"/>
<path d="M33.5 241.5L35.5 239.5H43.5L45.5 241.5V249.5L43.5 251.5H35.5L33.5 249.5Z" fill="url(#dkw)" stroke="#000000" stroke-width="1" shape-rendering="auto"/>
<rect x="8" y="248" width="12" height="13" fill="#000000"/>
<rect x="9" y="249" width="10" height="11" fill="url(#dg)"/>
<path d="M9 251H13L15 254.5L13 258H9Z" fill="#ffff00" shape-rendering="auto"/>
<ellipse cx="39.5" cy="267.5" rx="6" ry="4" fill="url(#dkw)" stroke="#000000" stroke-width="1" shape-rendering="auto"/>
<path d="M6.5 272.5H18.5L21.5 276.5L18.5 280.5H6.5Z" fill="url(#dy)" stroke="#000000" stroke-width="1" shape-rendering="auto"/>
<rect x="21" y="276" width="2" height="1" fill="#000000"/>
<text x="8" y="279.5" font-family="Liberation Sans" font-weight="bold" font-size="8" fill="#000">D1</text>
<path d="M44.5 284.5L41 283.5H38.5L34.5 287.5V291.5L38.5 295.5H41L44.5 294.5L40 289.5Z" fill="url(#dkw)" stroke="#000000" stroke-width="1" shape-rendering="auto"/>
<line x1="6" y1="296.5" x2="21" y2="296.5" stroke="#0000ff" stroke-dasharray="1,1"/><line x1="13.5" y1="297" x2="13.5" y2="304" stroke="#0000ff" stroke-dasharray="1,1"/>
<circle cx="13.5" cy="296.5" r="2" fill="#ff0000" stroke="#000000" stroke-width="0.8" shape-rendering="auto"/>
<rect x="32" y="304" width="14" height="14" fill="#ffffff"/>
<rect x="46" y="304" width="1" height="15" fill="#000000"/>
<rect x="32" y="318" width="15" height="1" fill="#000000"/>
<rect x="45" y="305" width="1" height="13" fill="#808080"/>
<rect x="33" y="317" width="13" height="1" fill="#808080"/>
<rect x="34" y="306" width="11" height="11" fill="#c0c0c0"/>
<rect x="35" y="307" width="9" height="9" fill="url(#dg)"/>
<rect x="35" y="307" width="1" height="1" fill="#000000"/>
<rect x="37" y="307" width="1" height="1" fill="#000000"/>
<rect x="39" y="307" width="1" height="1" fill="#000000"/>
<rect x="41" y="307" width="1" height="1" fill="#000000"/>
<rect x="43" y="307" width="1" height="1" fill="#000000"/>
<rect x="36" y="308" width="1" height="1" fill="#000000"/>
<rect x="38" y="308" width="1" height="1" fill="#000000"/>
<rect x="40" y="308" width="1" height="1" fill="#000000"/>
<rect x="42" y="308" width="1" height="1" fill="#000000"/>
<rect x="35" y="309" width="1" height="1" fill="#000000"/>
<rect x="37" y="309" width="1" height="1" fill="#000000"/>
<rect x="39" y="309" width="1" height="1" fill="#000000"/>
<rect x="41" y="309" width="1" height="1" fill="#000000"/>
<rect x="43" y="309" width="1" height="1" fill="#000000"/>
<rect x="36" y="310" width="1" height="1" fill="#000000"/>
<rect x="38" y="310" width="1" height="1" fill="#000000"/>
<rect x="40" y="310" width="1" height="1" fill="#000000"/>
<rect x="42" y="310" width="1" height="1" fill="#000000"/>
<rect x="35" y="311" width="1" height="1" fill="#000000"/>
<rect x="37" y="311" width="1" height="1" fill="#000000"/>
<rect x="39" y="311" width="1" height="1" fill="#000000"/>
<rect x="41" y="311" width="1" height="1" fill="#000000"/>
<rect x="43" y="311" width="1" height="1" fill="#000000"/>
<rect x="36" y="312" width="1" height="1" fill="#000000"/>
<rect x="38" y="312" width="1" height="1" fill="#000000"/>
<rect x="40" y="312" width="1" height="1" fill="#000000"/>
<rect x="42" y="312" width="1" height="1" fill="#000000"/>
<rect x="35" y="313" width="1" height="1" fill="#000000"/>
<rect x="37" y="313" width="1" height="1" fill="#000000"/>
<rect x="39" y="313" width="1" height="1" fill="#000000"/>
<rect x="41" y="313" width="1" height="1" fill="#000000"/>
<rect x="43" y="313" width="1" height="1" fill="#000000"/>
<rect x="36" y="314" width="1" height="1" fill="#000000"/>
<rect x="38" y="314" width="1" height="1" fill="#000000"/>
<rect x="40" y="314" width="1" height="1" fill="#000000"/>
<rect x="42" y="314" width="1" height="1" fill="#000000"/>
<rect x="35" y="315" width="1" height="1" fill="#000000"/>
<rect x="37" y="315" width="1" height="1" fill="#000000"/>
<rect x="39" y="315" width="1" height="1" fill="#000000"/>
<rect x="41" y="315" width="1" height="1" fill="#000000"/>
<rect x="43" y="315" width="1" height="1" fill="#000000"/>
<circle cx="40" cy="311.5" r="2.2" fill="#ffff00" shape-rendering="auto"/>
<rect x="38" y="313" width="1" height="1" fill="#ffffff"/>
<path d="M10 316L19 325M19 315L11 326" fill="none" stroke="#000000" stroke-width="2" shape-rendering="auto"/>
<path d="M10 316L18 324M18 315L12 325" fill="none" stroke="#ff0000" stroke-width="1" shape-rendering="auto"/>
<rect x="34" y="328" width="3" height="5" fill="#000000"/>
<rect x="35" y="329" width="1" height="1" fill="#ffff00"/>
<rect x="35" y="331" width="1" height="1" fill="#ffff00"/>
<rect x="33" y="329" width="1" height="1" fill="#000000"/>
<rect x="33" y="331" width="1" height="1" fill="#000000"/>
<rect x="39" y="328" width="3" height="5" fill="#000000"/>
<rect x="40" y="329" width="1" height="1" fill="#ffff00"/>
<rect x="40" y="331" width="1" height="1" fill="#ffff00"/>
<rect x="38" y="329" width="1" height="1" fill="#000000"/>
<rect x="38" y="331" width="1" height="1" fill="#000000"/>
<rect x="44" y="328" width="3" height="5" fill="#000000"/>
<rect x="45" y="329" width="1" height="1" fill="#ffff00"/>
<rect x="45" y="331" width="1" height="1" fill="#ffff00"/>
<rect x="43" y="329" width="1" height="1" fill="#000000"/>
<rect x="43" y="331" width="1" height="1" fill="#000000"/>
<rect x="34" y="335" width="3" height="5" fill="#000000"/>
<rect x="35" y="336" width="1" height="1" fill="#ffff00"/>
<rect x="35" y="338" width="1" height="1" fill="#ffff00"/>
<rect x="33" y="336" width="1" height="1" fill="#000000"/>
<rect x="33" y="338" width="1" height="1" fill="#000000"/>
<rect x="39" y="335" width="3" height="5" fill="#000000"/>
<rect x="40" y="336" width="1" height="1" fill="#ffff00"/>
<rect x="40" y="338" width="1" height="1" fill="#ffff00"/>
<rect x="38" y="336" width="1" height="1" fill="#000000"/>
<rect x="38" y="338" width="1" height="1" fill="#000000"/>
<rect x="44" y="335" width="3" height="5" fill="#000000"/>
<rect x="45" y="336" width="1" height="1" fill="#ffff00"/>
<rect x="45" y="338" width="1" height="1" fill="#ffff00"/>
<rect x="43" y="336" width="1" height="1" fill="#000000"/>
<rect x="43" y="338" width="1" height="1" fill="#000000"/>
<rect x="7" y="336" width="11" height="10" fill="#000000"/>
<rect x="8" y="337" width="9" height="8" fill="url(#dkw)"/>
<rect x="18" y="336" width="1" height="13" fill="#000000"/>
<rect x="19" y="336" width="1" height="13" fill="#000000"/>
<text x="9" y="345" font-family="Liberation Sans" font-weight="bold" font-size="9" fill="#000">P</text>
<rect x="183" y="3" width="1" height="2" fill="#ffffff"/>
<rect x="182" y="5" width="5" height="1" fill="#ffffff"/>
<rect x="182" y="6" width="1" height="1" fill="#ffffff"/>
<rect x="182" y="7" width="5" height="1" fill="#ffffff"/>
<rect x="182" y="9" width="5" height="1" fill="#ffffff"/>
<rect x="184" y="8" width="1" height="6" fill="#ffffff"/>
<rect x="185" y="13" width="1" height="1" fill="#ffffff"/>
<rect x="186" y="12" width="1" height="1" fill="#ffffff"/>
<rect x="188" y="3" width="1" height="3" fill="#ffffff"/>
<rect x="190" y="4" width="1" height="1" fill="#ffffff"/>
<rect x="191" y="5" width="3" height="1" fill="#ffffff"/>
<rect x="187" y="7" width="7" height="1" fill="#ffffff"/>
<rect x="190" y="8" width="1" height="2" fill="#ffffff"/>
<rect x="187" y="10" width="6" height="1" fill="#ffffff"/>
<rect x="191" y="11" width="1" height="1" fill="#ffffff"/>
<rect x="192" y="12" width="1" height="2" fill="#ffffff"/>
<rect x="193" y="14" width="1" height="1" fill="#ffffff"/>
<rect x="193" y="10" width="1" height="1" fill="#ffffff"/>
<rect x="190" y="12" width="1" height="1" fill="#ffffff"/>
<rect x="188" y="13" width="2" height="1" fill="#ffffff"/>
<rect x="187" y="14" width="1" height="1" fill="#ffffff"/>
<rect x="5" y="582" width="1" height="2" fill="#000000"/>
<rect x="5" y="585" width="1" height="2" fill="#ff0000"/>
<rect x="5" y="588" width="1" height="2" fill="#0000ff"/>
<rect x="5" y="591" width="1" height="2" fill="#000000"/>
<rect x="7" y="583" width="2" height="1" fill="#000000"/>
<rect x="7" y="586" width="5" height="2" fill="#ff0000"/>
<rect x="7" y="589" width="5" height="2" fill="#0000ff"/>
<rect x="7" y="592" width="5" height="1" fill="#000000"/>
<path d="M11 582L14 580H17L20 581.5V594L17 592.5H14L11 593.5Z" fill="#000000" shape-rendering="auto"/>
<path d="M13 583.5L15 582.5V585.5L13 586Z" fill="#ff0000" shape-rendering="auto"/>
<path d="M17 582.5L19 583.5V586L17 585.5Z" fill="#00ff00" shape-rendering="auto"/>
<path d="M13 588L15 587.5V590.5L13 591Z" fill="#00ffff" shape-rendering="auto"/>
<path d="M17 587.5L19 588V591L17 590.5Z" fill="#ffff00" shape-rendering="auto"/>
<path d="M36.5 580L29 587M36.5 580L44 587M31 587.5H42M30 590.5H43M28 594.5H45M36.5 587V594" fill="none" stroke="#000000" stroke-width="1" shape-rendering="auto"/>
<path d="M47 583.5H52M49.5 580V594L47.5 593M47 590L52 587M53 581L55 583M59 581L57 583M52 584.5H60M52 588.5H60M54.5 584V594L52.5 595M57.5 584V595" fill="none" stroke="#000000" stroke-width="1" shape-rendering="auto"/>
<path d="M73 581A6.5 6.5 0 1 1 66 591Q73 590 73 581Z" fill="#000000" shape-rendering="auto"/>
<rect x="89" y="586" width="2" height="2" fill="#000000"/>
<path d="M96 585V588L95 590" fill="none" stroke="#000000" stroke-width="1.5" shape-rendering="auto"/>
<rect x="106" y="581" width="14" height="11" fill="#808080"/>
<rect x="107" y="582" width="12" height="9" fill="#dddddd"/>
<rect x="108" y="583" width="2" height="2" fill="#808080"/>
<rect x="111" y="583" width="2" height="2" fill="#808080"/>
<rect x="114" y="583" width="2" height="2" fill="#808080"/>
<rect x="117" y="583" width="2" height="2" fill="#808080"/>
<rect x="108" y="586" width="2" height="2" fill="#808080"/>
<rect x="111" y="586" width="2" height="2" fill="#808080"/>
<rect x="114" y="586" width="2" height="2" fill="#808080"/>
<rect x="117" y="586" width="2" height="2" fill="#808080"/>
<rect x="109" y="589" width="9" height="1" fill="#808080"/>
<rect x="183" y="582" width="1" height="7" fill="#707070"/>
<rect x="184" y="581" width="1" height="1" fill="#707070"/>
<rect x="185" y="580" width="1" height="1" fill="#707070"/>
<rect x="186" y="581" width="1" height="1" fill="#707070"/>
<rect x="187" y="580" width="1" height="1" fill="#707070"/>
<rect x="188" y="581" width="1" height="1" fill="#707070"/>
<rect x="189" y="580" width="1" height="1" fill="#707070"/>
<rect x="190" y="581" width="1" height="1" fill="#707070"/>
<rect x="191" y="580" width="1" height="1" fill="#707070"/>
<rect x="192" y="581" width="1" height="1" fill="#707070"/>
<rect x="193" y="580" width="1" height="1" fill="#707070"/>
<path d="M190 583.5L197 578" stroke="#707070" stroke-width="1.2" shape-rendering="auto"/>
<rect x="184" y="582" width="1" height="1" fill="#707070"/>
<rect x="563" y="582" width="1" height="7" fill="#707070"/>
<rect x="564" y="581" width="1" height="1" fill="#707070"/>
<rect x="565" y="580" width="1" height="1" fill="#707070"/>
<rect x="566" y="581" width="1" height="1" fill="#707070"/>
<rect x="567" y="580" width="1" height="1" fill="#707070"/>
<rect x="568" y="581" width="1" height="1" fill="#707070"/>
<rect x="569" y="580" width="1" height="1" fill="#707070"/>
<rect x="570" y="581" width="1" height="1" fill="#707070"/>
<rect x="571" y="580" width="1" height="1" fill="#707070"/>
<rect x="572" y="581" width="1" height="1" fill="#707070"/>
<rect x="573" y="580" width="1" height="1" fill="#707070"/>
<path d="M570 583.5L577 578" stroke="#707070" stroke-width="1.2" shape-rendering="auto"/>
<rect x="564" y="582" width="1" height="1" fill="#707070"/>
<path d="M781.5 576.5H793.5V589.5H790L792 592L788 589.5H781.5Z" fill="url(#dy)" stroke="#000000" stroke-width="1" shape-rendering="auto"/>
<text x="787.5" y="588" font-family="Liberation Sans" font-weight="bold" font-size="12" fill="#000080" text-anchor="middle">?</text>
<defs><clipPath id="sheet"><rect x="62" y="97" width="714" height="455"/></clipPath></defs>
<g clip-path="url(#sheet)">
<rect x="62" y="97" width="714" height="455" fill="#ffffff"/>
<path d="M68.5 97V552M82.5 97V552M96.5 97V552M110.5 97V552M124.5 97V552M138.5 97V552M152.5 97V552M166.5 97V552M180.5 97V552M194.5 97V552M208.5 97V552M222.5 97V552M236.5 97V552M250.5 97V552M264.5 97V552M278.5 97V552M292.5 97V552M306.5 97V552M320.5 97V552M334.5 97V552M348.5 97V552M362.5 97V552M376.5 97V552M390.5 97V552M404.5 97V552M418.5 97V552M432.5 97V552M446.5 97V552M460.5 97V552M474.5 97V552M488.5 97V552M502.5 97V552M516.5 97V552M530.5 97V552M544.5 97V552M558.5 97V552M572.5 97V552M586.5 97V552M600.5 97V552M614.5 97V552M628.5 97V552M642.5 97V552M656.5 97V552M670.5 97V552M684.5 97V552M698.5 97V552M712.5 97V552M726.5 97V552M740.5 97V552M754.5 97V552M768.5 97V552M62 110.5H776M62 124.5H776M62 138.5H776M62 152.5H776M62 166.5H776M62 180.5H776M62 194.5H776M62 208.5H776M62 222.5H776M62 236.5H776M62 250.5H776M62 264.5H776M62 278.5H776M62 292.5H776M62 306.5H776M62 320.5H776M62 334.5H776M62 348.5H776M62 362.5H776M62 376.5H776M62 390.5H776M62 404.5H776M62 418.5H776M62 432.5H776M62 446.5H776M62 460.5H776M62 474.5H776M62 488.5H776M62 502.5H776M62 516.5H776M62 530.5H776M62 544.5H776" stroke="#c0c0c0" stroke-width="1" fill="none"/>
<rect x="152.5" y="60.5" width="209" height="105" fill="#c0c0c0" stroke="#800000" stroke-width="1"/>
<polygon points="341.5,90.5 356.5,90.5 362.5,96.5 356.5,102.5 341.5,102.5" fill="#c0c0c0" stroke="#800000" stroke-width="1"/>
<text x="334" y="100" font-family="Liberation Serif" font-size="12" fill="#800000" stroke="#800000" stroke-width="0.15" text-anchor="end" transform="matrix(0.92 0 0 1 26.720 0)">Pb IN</text>
<polygon points="341.5,104.5 356.5,104.5 362.5,110.5 356.5,116.5 341.5,116.5" fill="#c0c0c0" stroke="#800000" stroke-width="1"/>
<text x="334" y="114" font-family="Liberation Serif" font-size="12" fill="#800000" stroke="#800000" stroke-width="0.15" text-anchor="end" transform="matrix(0.92 0 0 1 26.720 0)">Pr IN</text>
<polygon points="341.5,118.5 356.5,118.5 362.5,124.5 356.5,130.5 341.5,130.5" fill="#c0c0c0" stroke="#800000" stroke-width="1"/>
<text x="334" y="128" font-family="Liberation Serif" font-size="12" fill="#800000" stroke="#800000" stroke-width="0.15" text-anchor="end" transform="matrix(0.92 0 0 1 26.720 0)">VGAInR</text>
<polygon points="341.5,132.5 356.5,132.5 362.5,138.5 356.5,144.5 341.5,144.5" fill="#c0c0c0" stroke="#800000" stroke-width="1"/>
<text x="334" y="142" font-family="Liberation Serif" font-size="12" fill="#800000" stroke="#800000" stroke-width="0.15" text-anchor="end" transform="matrix(0.92 0 0 1 26.720 0)">VGAInG</text>
<polygon points="341.5,146.5 356.5,146.5 362.5,152.5 356.5,158.5 341.5,158.5" fill="#c0c0c0" stroke="#800000" stroke-width="1"/>
<text x="334" y="156" font-family="Liberation Serif" font-size="12" fill="#800000" stroke="#800000" stroke-width="0.15" text-anchor="end" transform="matrix(0.92 0 0 1 26.720 0)">VGAInB</text>
<text x="138" y="233" font-family="Liberation Serif" font-size="12" fill="#000080" stroke="#000080" stroke-width="0.15" text-anchor="start" transform="matrix(0.96 0 0 1 5.520 0)">PW1235 deinterlace</text>
<text x="138" y="246" font-family="Liberation Serif" font-size="12" fill="#000080" stroke="#000080" stroke-width="0.15" text-anchor="start" transform="matrix(0.96 0 0 1 5.520 0)">PW1235 deinterlace.Sch</text>
<rect x="138.5" y="250.5" width="209" height="181" fill="#c0c0c0" stroke="#800000" stroke-width="1"/>
<polygon points="138.5,258.5 159.5,258.5 159.5,270.5 138.5,270.5" fill="#c0c0c0" stroke="#800000" stroke-width="1"/>
<text x="166" y="268" font-family="Liberation Serif" font-size="12" fill="#800000" stroke="#800000" stroke-width="0.15" text-anchor="start" transform="matrix(0.92 0 0 1 13.280 0)">MD[15:0]</text>
<polygon points="138.5,272.5 159.5,272.5 159.5,283.5 138.5,283.5" fill="#c0c0c0" stroke="#800000" stroke-width="1"/>
<text x="166" y="282" font-family="Liberation Serif" font-size="12" fill="#800000" stroke="#800000" stroke-width="0.15" text-anchor="start" transform="matrix(0.92 0 0 1 13.280 0)">MA[13:0]</text>
<polygon points="138.5,286.5 153.5,286.5 159.5,292.5 153.5,297.5 138.5,297.5" fill="#c0c0c0" stroke="#800000" stroke-width="1"/>
<text x="166" y="296" font-family="Liberation Serif" font-size="12" fill="#800000" stroke="#800000" stroke-width="0.15" text-anchor="start" transform="matrix(0.92 0 0 1 13.280 0)">MWE</text>
<polygon points="138.5,300.5 153.5,300.5 159.5,306.5 153.5,311.5 138.5,311.5" fill="#c0c0c0" stroke="#800000" stroke-width="1"/>
<text x="166" y="310" font-family="Liberation Serif" font-size="12" fill="#800000" stroke="#800000" stroke-width="0.15" text-anchor="start" transform="matrix(0.92 0 0 1 13.280 0)">MCAS</text>
<polygon points="138.5,314.5 153.5,314.5 159.5,320.5 153.5,325.5 138.5,325.5" fill="#c0c0c0" stroke="#800000" stroke-width="1"/>
<text x="166" y="324" font-family="Liberation Serif" font-size="12" fill="#800000" stroke="#800000" stroke-width="0.15" text-anchor="start" transform="matrix(0.92 0 0 1 13.280 0)">MRAS</text>
<polygon points="138.5,328.5 153.5,328.5 159.5,334.5 153.5,339.5 138.5,339.5" fill="#c0c0c0" stroke="#800000" stroke-width="1"/>
<text x="166" y="338" font-family="Liberation Serif" font-size="12" fill="#800000" stroke="#800000" stroke-width="0.15" text-anchor="start" transform="matrix(0.92 0 0 1 13.280 0)">MCLK</text>
<polygon points="144.5,342.5 153.5,342.5 159.5,348.5 153.5,353.5 144.5,353.5 138.5,348.5" fill="#c0c0c0" stroke="#800000" stroke-width="1"/>
<text x="166" y="352" font-family="Liberation Serif" font-size="12" fill="#800000" stroke="#800000" stroke-width="0.15" text-anchor="start" transform="matrix(0.92 0 0 1 13.280 0)">SDA</text>
<polygon points="138.5,356.5 153.5,356.5 159.5,362.5 153.5,367.5 138.5,367.5" fill="#c0c0c0" stroke="#800000" stroke-width="1"/>
<text x="166" y="366" font-family="Liberation Serif" font-size="12" fill="#800000" stroke="#800000" stroke-width="0.15" text-anchor="start" transform="matrix(0.92 0 0 1 13.280 0)">OutR</text>
<polygon points="138.5,370.5 153.5,370.5 159.5,376.5 153.5,381.5 138.5,381.5" fill="#c0c0c0" stroke="#800000" stroke-width="1"/>
<text x="166" y="380" font-family="Liberation Serif" font-size="12" fill="#800000" stroke="#800000" stroke-width="0.15" text-anchor="start" transform="matrix(0.92 0 0 1 13.280 0)">OutG</text>
<polygon points="138.5,384.5 153.5,384.5 159.5,390.5 153.5,395.5 138.5,395.5" fill="#c0c0c0" stroke="#800000" stroke-width="1"/>
<text x="166" y="394" font-family="Liberation Serif" font-size="12" fill="#800000" stroke="#800000" stroke-width="0.15" text-anchor="start" transform="matrix(0.92 0 0 1 13.280 0)">OutB</text>
<polygon points="138.5,398.5 153.5,398.5 159.5,404.5 153.5,409.5 138.5,409.5" fill="#c0c0c0" stroke="#800000" stroke-width="1"/>
<text x="166" y="408" font-family="Liberation Serif" font-size="12" fill="#800000" stroke="#800000" stroke-width="0.15" text-anchor="start" transform="matrix(0.92 0 0 1 13.280 0)">OutVs</text>
<polygon points="138.5,412.5 153.5,412.5 159.5,418.5 153.5,423.5 138.5,423.5" fill="#c0c0c0" stroke="#800000" stroke-width="1"/>
<text x="166" y="422" font-family="Liberation Serif" font-size="12" fill="#800000" stroke="#800000" stroke-width="0.15" text-anchor="start" transform="matrix(0.92 0 0 1 13.280 0)">OutHs</text>
<polygon points="327.5,258.5 342.5,258.5 348.5,264.5 342.5,270.5 327.5,270.5" fill="#c0c0c0" stroke="#800000" stroke-width="1"/>
<text x="320" y="268" font-family="Liberation Serif" font-size="12" fill="#800000" stroke="#800000" stroke-width="0.15" text-anchor="end" transform="matrix(0.92 0 0 1 25.600 0)">MCLKFB</text>
<polygon points="327.5,272.5 342.5,272.5 348.5,278.5 342.5,283.5 327.5,283.5" fill="#c0c0c0" stroke="#800000" stroke-width="1"/>
<text x="320" y="282" font-family="Liberation Serif" font-size="12" fill="#800000" stroke="#800000" stroke-width="0.15" text-anchor="end" transform="matrix(0.92 0 0 1 25.600 0)">SCL</text>
<polygon points="327.5,286.5 342.5,286.5 348.5,292.5 342.5,297.5 327.5,297.5" fill="#c0c0c0" stroke="#800000" stroke-width="1"/>
<text x="320" y="296" font-family="Liberation Serif" font-size="12" fill="#800000" stroke="#800000" stroke-width="0.15" text-anchor="end" transform="matrix(0.92 0 0 1 25.600 0)">RESET</text>
<polygon points="327.5,300.5 342.5,300.5 348.5,306.5 342.5,311.5 327.5,311.5" fill="#c0c0c0" stroke="#800000" stroke-width="1"/>
<text x="320" y="310" font-family="Liberation Serif" font-size="12" fill="#800000" stroke="#800000" stroke-width="0.15" text-anchor="end" transform="matrix(0.92 0 0 1 25.600 0)">VPB[7:0]</text>
<polygon points="327.5,314.5 342.5,314.5 348.5,320.5 342.5,325.5 327.5,325.5" fill="#c0c0c0" stroke="#800000" stroke-width="1"/>
<text x="320" y="324" font-family="Liberation Serif" font-size="12" fill="#800000" stroke="#800000" stroke-width="0.15" text-anchor="end" transform="matrix(0.92 0 0 1 25.600 0)">VPG[7:0]</text>
<polygon points="327.5,328.5 342.5,328.5 348.5,334.5 342.5,339.5 327.5,339.5" fill="#c0c0c0" stroke="#800000" stroke-width="1"/>
<text x="320" y="338" font-family="Liberation Serif" font-size="12" fill="#800000" stroke="#800000" stroke-width="0.15" text-anchor="end" transform="matrix(0.92 0 0 1 25.600 0)">VPR[7:0]</text>
<polygon points="327.5,342.5 342.5,342.5 348.5,348.5 342.5,353.5 327.5,353.5" fill="#c0c0c0" stroke="#800000" stroke-width="1"/>
<text x="320" y="352" font-family="Liberation Serif" font-size="12" fill="#800000" stroke="#800000" stroke-width="0.15" text-anchor="end" transform="matrix(0.92 0 0 1 25.600 0)">DGHS</text>
<polygon points="327.5,356.5 342.5,356.5 348.5,362.5 342.5,367.5 327.5,367.5" fill="#c0c0c0" stroke="#800000" stroke-width="1"/>
<text x="320" y="366" font-family="Liberation Serif" font-size="12" fill="#800000" stroke="#800000" stroke-width="0.15" text-anchor="end" transform="matrix(0.92 0 0 1 25.600 0)">DGVS</text>
<polygon points="327.5,370.5 342.5,370.5 348.5,376.5 342.5,381.5 327.5,381.5" fill="#c0c0c0" stroke="#800000" stroke-width="1"/>
<text x="320" y="380" font-family="Liberation Serif" font-size="12" fill="#800000" stroke="#800000" stroke-width="0.15" text-anchor="end" transform="matrix(0.92 0 0 1 25.600 0)">GCLK</text>
<g stroke="#ff0000" stroke-width="1" fill="none"><circle cx="138.5" cy="292" r="5"/><line x1="132.5" y1="286.5" x2="144.5" y2="297.5"/><line x1="144.5" y1="286.5" x2="132.5" y2="297.5"/></g>
<g stroke="#ff0000" stroke-width="1" fill="none"><circle cx="138.5" cy="306" r="5"/><line x1="132.5" y1="300.5" x2="144.5" y2="311.5"/><line x1="144.5" y1="300.5" x2="132.5" y2="311.5"/></g>
<g stroke="#ff0000" stroke-width="1" fill="none"><circle cx="138.5" cy="320" r="5"/><line x1="132.5" y1="314.5" x2="144.5" y2="325.5"/><line x1="144.5" y1="314.5" x2="132.5" y2="325.5"/></g>
<g stroke="#ff0000" stroke-width="1" fill="none"><circle cx="138.5" cy="334" r="5"/><line x1="132.5" y1="328.5" x2="144.5" y2="339.5"/><line x1="144.5" y1="328.5" x2="132.5" y2="339.5"/></g>
<g stroke="#ff0000" stroke-width="1" fill="none"><circle cx="138.5" cy="362" r="5"/><line x1="132.5" y1="356.5" x2="144.5" y2="367.5"/><line x1="144.5" y1="356.5" x2="132.5" y2="367.5"/></g>
<g stroke="#ff0000" stroke-width="1" fill="none"><circle cx="138.5" cy="376" r="5"/><line x1="132.5" y1="370.5" x2="144.5" y2="381.5"/><line x1="144.5" y1="370.5" x2="132.5" y2="381.5"/></g>
<g stroke="#ff0000" stroke-width="1" fill="none"><circle cx="138.5" cy="390" r="5"/><line x1="132.5" y1="384.5" x2="144.5" y2="395.5"/><line x1="144.5" y1="384.5" x2="132.5" y2="395.5"/></g>
<g stroke="#ff0000" stroke-width="1" fill="none"><circle cx="138.5" cy="404" r="5"/><line x1="132.5" y1="398.5" x2="144.5" y2="409.5"/><line x1="144.5" y1="398.5" x2="132.5" y2="409.5"/></g>
<g stroke="#ff0000" stroke-width="1" fill="none"><circle cx="138.5" cy="418" r="5"/><line x1="132.5" y1="412.5" x2="144.5" y2="423.5"/><line x1="144.5" y1="412.5" x2="132.5" y2="423.5"/></g>
<text x="446" y="331" font-family="Liberation Serif" font-size="12" fill="#000080" stroke="#000080" stroke-width="0.15" text-anchor="start" transform="matrix(0.96 0 0 1 17.840 0)">PW1235 MEMORY</text>
<text x="446" y="345" font-family="Liberation Serif" font-size="12" fill="#000080" stroke="#000080" stroke-width="0.15" text-anchor="start" transform="matrix(0.96 0 0 1 17.840 0)">PW1235 MEMORY.Sch</text>
<rect x="446.5" y="348.5" width="209" height="83" fill="#c0c0c0" stroke="#800000" stroke-width="1"/>
<polygon points="446.5,356.5 467.5,356.5 467.5,367.5 446.5,367.5" fill="#c0c0c0" stroke="#800000" stroke-width="1"/>
<text x="474" y="366" font-family="Liberation Serif" font-size="12" fill="#800000" stroke="#800000" stroke-width="0.15" text-anchor="start" transform="matrix(0.92 0 0 1 37.920 0)">MD[15:0]</text>
<polygon points="446.5,370.5 461.5,370.5 467.5,376.5 461.5,381.5 446.5,381.5" fill="#c0c0c0" stroke="#800000" stroke-width="1"/>
<text x="474" y="380" font-family="Liberation Serif" font-size="12" fill="#800000" stroke="#800000" stroke-width="0.15" text-anchor="start" transform="matrix(0.92 0 0 1 37.920 0)">MCLKFB</text>
<g stroke="#ff0000" stroke-width="1" fill="none"><circle cx="446.5" cy="376" r="5"/><line x1="440.5" y1="370.5" x2="452.5" y2="381.5"/><line x1="452.5" y1="370.5" x2="440.5" y2="381.5"/></g>
<polygon points="635.5,356.5 650.5,356.5 656.5,362.5 650.5,367.5 635.5,367.5" fill="#c0c0c0" stroke="#800000" stroke-width="1"/>
<text x="628" y="366" font-family="Liberation Serif" font-size="12" fill="#800000" stroke="#800000" stroke-width="0.15" text-anchor="end" transform="matrix(0.92 0 0 1 50.240 0)">MA[13:0]</text>
<polygon points="635.5,370.5 650.5,370.5 656.5,376.5 650.5,381.5 635.5,381.5" fill="#c0c0c0" stroke="#800000" stroke-width="1"/>
<text x="628" y="380" font-family="Liberation Serif" font-size="12" fill="#800000" stroke="#800000" stroke-width="0.15" text-anchor="end" transform="matrix(0.92 0 0 1 50.240 0)">MWE</text>
<polygon points="635.5,384.5 650.5,384.5 656.5,390.5 650.5,395.5 635.5,395.5" fill="#c0c0c0" stroke="#800000" stroke-width="1"/>
<text x="628" y="394" font-family="Liberation Serif" font-size="12" fill="#800000" stroke="#800000" stroke-width="0.15" text-anchor="end" transform="matrix(0.92 0 0 1 50.240 0)">MCAS</text>
<polygon points="635.5,398.5 650.5,398.5 656.5,404.5 650.5,409.5 635.5,409.5" fill="#c0c0c0" stroke="#800000" stroke-width="1"/>
<text x="628" y="408" font-family="Liberation Serif" font-size="12" fill="#800000" stroke="#800000" stroke-width="0.15" text-anchor="end" transform="matrix(0.92 0 0 1 50.240 0)">MRAS</text>
<polygon points="635.5,412.5 650.5,412.5 656.5,418.5 650.5,423.5 635.5,423.5" fill="#c0c0c0" stroke="#800000" stroke-width="1"/>
<text x="628" y="422" font-family="Liberation Serif" font-size="12" fill="#800000" stroke="#800000" stroke-width="0.15" text-anchor="end" transform="matrix(0.92 0 0 1 50.240 0)">MCLK</text>
<rect x="460.5" y="60.5" width="209" height="203" fill="#c0c0c0" stroke="#800000" stroke-width="1"/>
<polygon points="460.5,90.5 481.5,90.5 481.5,102.5 460.5,102.5" fill="#c0c0c0" stroke="#800000" stroke-width="1"/>
<text x="488" y="100" font-family="Liberation Serif" font-size="12" fill="#800000" stroke="#800000" stroke-width="0.15" text-anchor="start" transform="matrix(0.92 0 0 1 39.040 0)">+8V</text>
<polygon points="460.5,104.5 481.5,104.5 481.5,116.5 460.5,116.5" fill="#c0c0c0" stroke="#800000" stroke-width="1"/>
<text x="488" y="114" font-family="Liberation Serif" font-size="12" fill="#800000" stroke="#800000" stroke-width="0.15" text-anchor="start" transform="matrix(0.92 0 0 1 39.040 0)">SV-1</text>
<polygon points="460.5,118.5 481.5,118.5 481.5,130.5 460.5,130.5" fill="#c0c0c0" stroke="#800000" stroke-width="1"/>
<text x="488" y="128" font-family="Liberation Serif" font-size="12" fill="#800000" stroke="#800000" stroke-width="0.15" text-anchor="start" transform="matrix(0.92 0 0 1 39.040 0)">V OUT</text>
<polygon points="460.5,132.5 481.5,132.5 481.5,144.5 460.5,144.5" fill="#c0c0c0" stroke="#800000" stroke-width="1"/>
<text x="488" y="142" font-family="Liberation Serif" font-size="12" fill="#800000" stroke="#800000" stroke-width="0.15" text-anchor="start" transform="matrix(0.92 0 0 1 39.040 0)">EXT/C IN</text>
<polygon points="460.5,146.5 481.5,146.5 481.5,158.5 460.5,158.5" fill="#c0c0c0" stroke="#800000" stroke-width="1"/>
<text x="488" y="156" font-family="Liberation Serif" font-size="12" fill="#800000" stroke="#800000" stroke-width="0.15" text-anchor="start" transform="matrix(0.92 0 0 1 39.040 0)">TV/Y IN</text>
<polygon points="460.5,160.5 481.5,160.5 481.5,172.5 460.5,172.5" fill="#c0c0c0" stroke="#800000" stroke-width="1"/>
<text x="488" y="170" font-family="Liberation Serif" font-size="12" fill="#800000" stroke="#800000" stroke-width="0.15" text-anchor="start" transform="matrix(0.92 0 0 1 39.040 0)">Cb IN</text>
<polygon points="460.5,174.5 481.5,174.5 481.5,186.5 460.5,186.5" fill="#c0c0c0" stroke="#800000" stroke-width="1"/>
<text x="488" y="184" font-family="Liberation Serif" font-size="12" fill="#800000" stroke="#800000" stroke-width="0.15" text-anchor="start" transform="matrix(0.92 0 0 1 39.040 0)">Cr IN</text>
<polygon points="460.5,188.5 481.5,188.5 481.5,200.5 460.5,200.5" fill="#c0c0c0" stroke="#800000" stroke-width="1"/>
<text x="488" y="198" font-family="Liberation Serif" font-size="12" fill="#800000" stroke="#800000" stroke-width="0.15" text-anchor="start" transform="matrix(0.92 0 0 1 39.040 0)">A OUT</text>
<polygon points="460.5,202.5 481.5,202.5 481.5,214.5 460.5,214.5" fill="#c0c0c0" stroke="#800000" stroke-width="1"/>
<text x="488" y="212" font-family="Liberation Serif" font-size="12" fill="#800000" stroke="#800000" stroke-width="0.15" text-anchor="start" transform="matrix(0.92 0 0 1 39.040 0)">TV OUT</text>
<polygon points="460.5,216.5 481.5,216.5 481.5,228.5 460.5,228.5" fill="#c0c0c0" stroke="#800000" stroke-width="1"/>
<text x="488" y="226" font-family="Liberation Serif" font-size="12" fill="#800000" stroke="#800000" stroke-width="0.15" text-anchor="start" transform="matrix(0.92 0 0 1 39.040 0)">AGC</text>
<polygon points="460.5,230.5 481.5,230.5 481.5,242.5 460.5,242.5" fill="#c0c0c0" stroke="#800000" stroke-width="1"/>
<text x="488" y="240" font-family="Liberation Serif" font-size="12" fill="#800000" stroke="#800000" stroke-width="0.15" text-anchor="start" transform="matrix(0.92 0 0 1 39.040 0)">IF IN</text>
<polygon points="460.5,244.5 481.5,244.5 481.5,256.5 460.5,256.5" fill="#c0c0c0" stroke="#800000" stroke-width="1"/>
<text x="488" y="254" font-family="Liberation Serif" font-size="12" fill="#800000" stroke="#800000" stroke-width="0.15" text-anchor="start" transform="matrix(0.92 0 0 1 39.040 0)">+12V</text>
<rect x="726.5" y="60.5" width="174" height="640" fill="#c0c0c0" stroke="#800000" stroke-width="1"/>
<polygon points="726.5,90.5 747.5,90.5 747.5,102.5 726.5,102.5" fill="#c0c0c0" stroke="#800000" stroke-width="1"/>
<text x="754" y="100" font-family="Liberation Serif" font-size="12" fill="#800000" stroke="#800000" stroke-width="0.15" text-anchor="start" transform="matrix(0.92 0 0 1 60.320 0)">STB</text>
<polygon points="726.5,104.5 747.5,104.5 747.5,116.5 726.5,116.5" fill="#c0c0c0" stroke="#800000" stroke-width="1"/>
<text x="754" y="114" font-family="Liberation Serif" font-size="12" fill="#800000" stroke="#800000" stroke-width="0.15" text-anchor="start" transform="matrix(0.92 0 0 1 60.320 0)">SV-1</text>
<polygon points="726.5,118.5 747.5,118.5 747.5,130.5 726.5,130.5" fill="#c0c0c0" stroke="#800000" stroke-width="1"/>
<text x="754" y="128" font-family="Liberation Serif" font-size="12" fill="#800000" stroke="#800000" stroke-width="0.15" text-anchor="start" transform="matrix(0.92 0 0 1 60.320 0)">MUTE</text>
<polygon points="726.5,132.5 747.5,132.5 747.5,144.5 726.5,144.5" fill="#c0c0c0" stroke="#800000" stroke-width="1"/>
<text x="754" y="142" font-family="Liberation Serif" font-size="12" fill="#800000" stroke="#800000" stroke-width="0.15" text-anchor="start" transform="matrix(0.92 0 0 1 60.320 0)">MUTE</text>
<polygon points="726.5,146.5 747.5,146.5 747.5,158.5 726.5,158.5" fill="#c0c0c0" stroke="#800000" stroke-width="1"/>
<text x="754" y="156" font-family="Liberation Serif" font-size="12" fill="#800000" stroke="#800000" stroke-width="0.15" text-anchor="start" transform="matrix(0.92 0 0 1 60.320 0)">EHT</text>
<polygon points="726.5,160.5 747.5,160.5 747.5,172.5 726.5,172.5" fill="#c0c0c0" stroke="#800000" stroke-width="1"/>
<text x="754" y="170" font-family="Liberation Serif" font-size="12" fill="#800000" stroke="#800000" stroke-width="0.15" text-anchor="start" transform="matrix(0.92 0 0 1 60.320 0)">ABL</text>
<polygon points="726.5,174.5 747.5,174.5 747.5,186.5 726.5,186.5" fill="#c0c0c0" stroke="#800000" stroke-width="1"/>
<text x="754" y="184" font-family="Liberation Serif" font-size="12" fill="#800000" stroke="#800000" stroke-width="0.15" text-anchor="start" transform="matrix(0.92 0 0 1 60.320 0)">IF IN</text>
<polygon points="726.5,188.5 747.5,188.5 747.5,200.5 726.5,200.5" fill="#c0c0c0" stroke="#800000" stroke-width="1"/>
<text x="754" y="198" font-family="Liberation Serif" font-size="12" fill="#800000" stroke="#800000" stroke-width="0.15" text-anchor="start" transform="matrix(0.92 0 0 1 60.320 0)">P/N :</text>
<polygon points="726.5,202.5 747.5,202.5 747.5,214.5 726.5,214.5" fill="#c0c0c0" stroke="#800000" stroke-width="1"/>
<text x="754" y="212" font-family="Liberation Serif" font-size="12" fill="#800000" stroke="#800000" stroke-width="0.15" text-anchor="start" transform="matrix(0.92 0 0 1 60.320 0)">Cr IN</text>
<polygon points="726.5,216.5 747.5,216.5 747.5,228.5 726.5,228.5" fill="#c0c0c0" stroke="#800000" stroke-width="1"/>
<text x="754" y="226" font-family="Liberation Serif" font-size="12" fill="#800000" stroke="#800000" stroke-width="0.15" text-anchor="start" transform="matrix(0.92 0 0 1 60.320 0)">V OUT</text>
<polygon points="726.5,230.5 747.5,230.5 747.5,242.5 726.5,242.5" fill="#c0c0c0" stroke="#800000" stroke-width="1"/>
<text x="754" y="240" font-family="Liberation Serif" font-size="12" fill="#800000" stroke="#800000" stroke-width="0.15" text-anchor="start" transform="matrix(0.92 0 0 1 60.320 0)">SVA</text>
<polygon points="726.5,244.5 747.5,244.5 747.5,256.5 726.5,256.5" fill="#c0c0c0" stroke="#800000" stroke-width="1"/>
<text x="754" y="254" font-family="Liberation Serif" font-size="12" fill="#800000" stroke="#800000" stroke-width="0.15" text-anchor="start" transform="matrix(0.92 0 0 1 60.320 0)">+8V</text>
<polygon points="726.5,258.5 747.5,258.5 747.5,270.5 726.5,270.5" fill="#c0c0c0" stroke="#800000" stroke-width="1"/>
<text x="754" y="268" font-family="Liberation Serif" font-size="12" fill="#800000" stroke="#800000" stroke-width="0.15" text-anchor="start" transform="matrix(0.92 0 0 1 60.320 0)">A OUT</text>
<polygon points="726.5,272.5 747.5,272.5 747.5,283.5 726.5,283.5" fill="#c0c0c0" stroke="#800000" stroke-width="1"/>
<text x="754" y="282" font-family="Liberation Serif" font-size="12" fill="#800000" stroke="#800000" stroke-width="0.15" text-anchor="start" transform="matrix(0.92 0 0 1 60.320 0)">+5V</text>
<polygon points="726.5,286.5 747.5,286.5 747.5,297.5 726.5,297.5" fill="#c0c0c0" stroke="#800000" stroke-width="1"/>
<text x="754" y="296" font-family="Liberation Serif" font-size="12" fill="#800000" stroke="#800000" stroke-width="0.15" text-anchor="start" transform="matrix(0.92 0 0 1 60.320 0)">AGC</text>
<polygon points="726.5,300.5 747.5,300.5 747.5,311.5 726.5,311.5" fill="#c0c0c0" stroke="#800000" stroke-width="1"/>
<text x="754" y="310" font-family="Liberation Serif" font-size="12" fill="#800000" stroke="#800000" stroke-width="0.15" text-anchor="start" transform="matrix(0.92 0 0 1 60.320 0)">C IN</text>
<polygon points="726.5,314.5 747.5,314.5 747.5,325.5 726.5,325.5" fill="#c0c0c0" stroke="#800000" stroke-width="1"/>
<text x="754" y="324" font-family="Liberation Serif" font-size="12" fill="#800000" stroke="#800000" stroke-width="0.15" text-anchor="start" transform="matrix(0.92 0 0 1 60.320 0)">HDT</text>
<polygon points="726.5,328.5 747.5,328.5 747.5,339.5 726.5,339.5" fill="#c0c0c0" stroke="#800000" stroke-width="1"/>
<text x="754" y="338" font-family="Liberation Serif" font-size="12" fill="#800000" stroke="#800000" stroke-width="0.15" text-anchor="start" transform="matrix(0.92 0 0 1 60.320 0)">Y(I)</text>
<polygon points="726.5,342.5 747.5,342.5 747.5,353.5 726.5,353.5" fill="#c0c0c0" stroke="#800000" stroke-width="1"/>
<text x="754" y="352" font-family="Liberation Serif" font-size="12" fill="#800000" stroke="#800000" stroke-width="0.15" text-anchor="start" transform="matrix(0.92 0 0 1 60.320 0)">Cb IN</text>
<polygon points="726.5,356.5 747.5,356.5 747.5,367.5 726.5,367.5" fill="#c0c0c0" stroke="#800000" stroke-width="1"/>
<text x="754" y="366" font-family="Liberation Serif" font-size="12" fill="#800000" stroke="#800000" stroke-width="0.15" text-anchor="start" transform="matrix(0.92 0 0 1 60.320 0)">Cr IN</text>
<polygon points="726.5,370.5 747.5,370.5 747.5,381.5 726.5,381.5" fill="#c0c0c0" stroke="#800000" stroke-width="1"/>
<text x="754" y="380" font-family="Liberation Serif" font-size="12" fill="#800000" stroke="#800000" stroke-width="0.15" text-anchor="start" transform="matrix(0.92 0 0 1 60.320 0)">EXT</text>
<polygon points="726.5,384.5 747.5,384.5 747.5,395.5 726.5,395.5" fill="#c0c0c0" stroke="#800000" stroke-width="1"/>
<text x="754" y="394" font-family="Liberation Serif" font-size="12" fill="#800000" stroke="#800000" stroke-width="0.15" text-anchor="start" transform="matrix(0.92 0 0 1 60.320 0)">V OUT</text>
<polygon points="726.5,398.5 747.5,398.5 747.5,409.5 726.5,409.5" fill="#c0c0c0" stroke="#800000" stroke-width="1"/>
<text x="754" y="408" font-family="Liberation Serif" font-size="12" fill="#800000" stroke="#800000" stroke-width="0.15" text-anchor="start" transform="matrix(0.92 0 0 1 60.320 0)">SVD</text>
<polygon points="726.5,412.5 747.5,412.5 747.5,423.5 726.5,423.5" fill="#c0c0c0" stroke="#800000" stroke-width="1"/>
<text x="754" y="422" font-family="Liberation Serif" font-size="12" fill="#800000" stroke="#800000" stroke-width="0.15" text-anchor="start" transform="matrix(0.92 0 0 1 60.320 0)">+8V</text>
<polygon points="726.5,426.5 747.5,426.5 747.5,437.5 726.5,437.5" fill="#c0c0c0" stroke="#800000" stroke-width="1"/>
<text x="754" y="436" font-family="Liberation Serif" font-size="12" fill="#800000" stroke="#800000" stroke-width="0.15" text-anchor="start" transform="matrix(0.92 0 0 1 60.320 0)">A OUT</text>
<polygon points="726.5,440.5 747.5,440.5 747.5,451.5 726.5,451.5" fill="#c0c0c0" stroke="#800000" stroke-width="1"/>
<text x="754" y="450" font-family="Liberation Serif" font-size="12" fill="#800000" stroke="#800000" stroke-width="0.15" text-anchor="start" transform="matrix(0.92 0 0 1 60.320 0)">S SW</text>
<polygon points="726.5,454.5 747.5,454.5 747.5,465.5 726.5,465.5" fill="#c0c0c0" stroke="#800000" stroke-width="1"/>
<text x="754" y="464" font-family="Liberation Serif" font-size="12" fill="#800000" stroke="#800000" stroke-width="0.15" text-anchor="start" transform="matrix(0.92 0 0 1 60.320 0)">HDT</text>
<polygon points="726.5,468.5 747.5,468.5 747.5,479.5 726.5,479.5" fill="#c0c0c0" stroke="#800000" stroke-width="1"/>
<text x="754" y="478" font-family="Liberation Serif" font-size="12" fill="#800000" stroke="#800000" stroke-width="0.15" text-anchor="start" transform="matrix(0.92 0 0 1 60.320 0)">+12V</text>
<polygon points="726.5,482.5 747.5,482.5 747.5,493.5 726.5,493.5" fill="#c0c0c0" stroke="#800000" stroke-width="1"/>
<text x="754" y="492" font-family="Liberation Serif" font-size="12" fill="#800000" stroke="#800000" stroke-width="0.15" text-anchor="start" transform="matrix(0.92 0 0 1 60.320 0)">HDT</text>
<polygon points="726.5,496.5 747.5,496.5 747.5,507.5 726.5,507.5" fill="#c0c0c0" stroke="#800000" stroke-width="1"/>
<text x="754" y="506" font-family="Liberation Serif" font-size="12" fill="#800000" stroke="#800000" stroke-width="0.15" text-anchor="start" transform="matrix(0.92 0 0 1 60.320 0)">EXT</text>
<polygon points="726.5,510.5 747.5,510.5 747.5,521.5 726.5,521.5" fill="#c0c0c0" stroke="#800000" stroke-width="1"/>
<text x="754" y="520" font-family="Liberation Serif" font-size="12" fill="#800000" stroke="#800000" stroke-width="0.15" text-anchor="start" transform="matrix(0.92 0 0 1 60.320 0)">EXT</text>
<polygon points="726.5,524.5 747.5,524.5 747.5,535.5 726.5,535.5" fill="#c0c0c0" stroke="#800000" stroke-width="1"/>
<text x="754" y="534" font-family="Liberation Serif" font-size="12" fill="#800000" stroke="#800000" stroke-width="0.15" text-anchor="start" transform="matrix(0.92 0 0 1 60.320 0)">SCL</text>
<polygon points="726.5,538.5 747.5,538.5 747.5,549.5 726.5,549.5" fill="#c0c0c0" stroke="#800000" stroke-width="1"/>
<text x="754" y="548" font-family="Liberation Serif" font-size="12" fill="#800000" stroke="#800000" stroke-width="0.15" text-anchor="start" transform="matrix(0.92 0 0 1 60.320 0)">SDA</text>
<path d="M348 264.5H418.5V361.5H446 M348 291.5H390.5V375.5H446" stroke="#000080" stroke-width="1" fill="none"/>
<text x="488" y="513" font-family="Liberation Serif" font-size="12" fill="#000080" stroke="#000080" stroke-width="0.15" text-anchor="start" transform="matrix(0.96 0 0 1 19.520 0)">PW1235 POWER</text>
<text x="488" y="527" font-family="Liberation Serif" font-size="12" fill="#000080" stroke="#000080" stroke-width="0.15" text-anchor="start" transform="matrix(0.96 0 0 1 19.520 0)">PW1235 POWER.Sch</text>
<rect x="488.5" y="530.5" width="209" height="170" fill="#c0c0c0" stroke="#800000" stroke-width="1"/>
</g>
</svg>
</body></html>
